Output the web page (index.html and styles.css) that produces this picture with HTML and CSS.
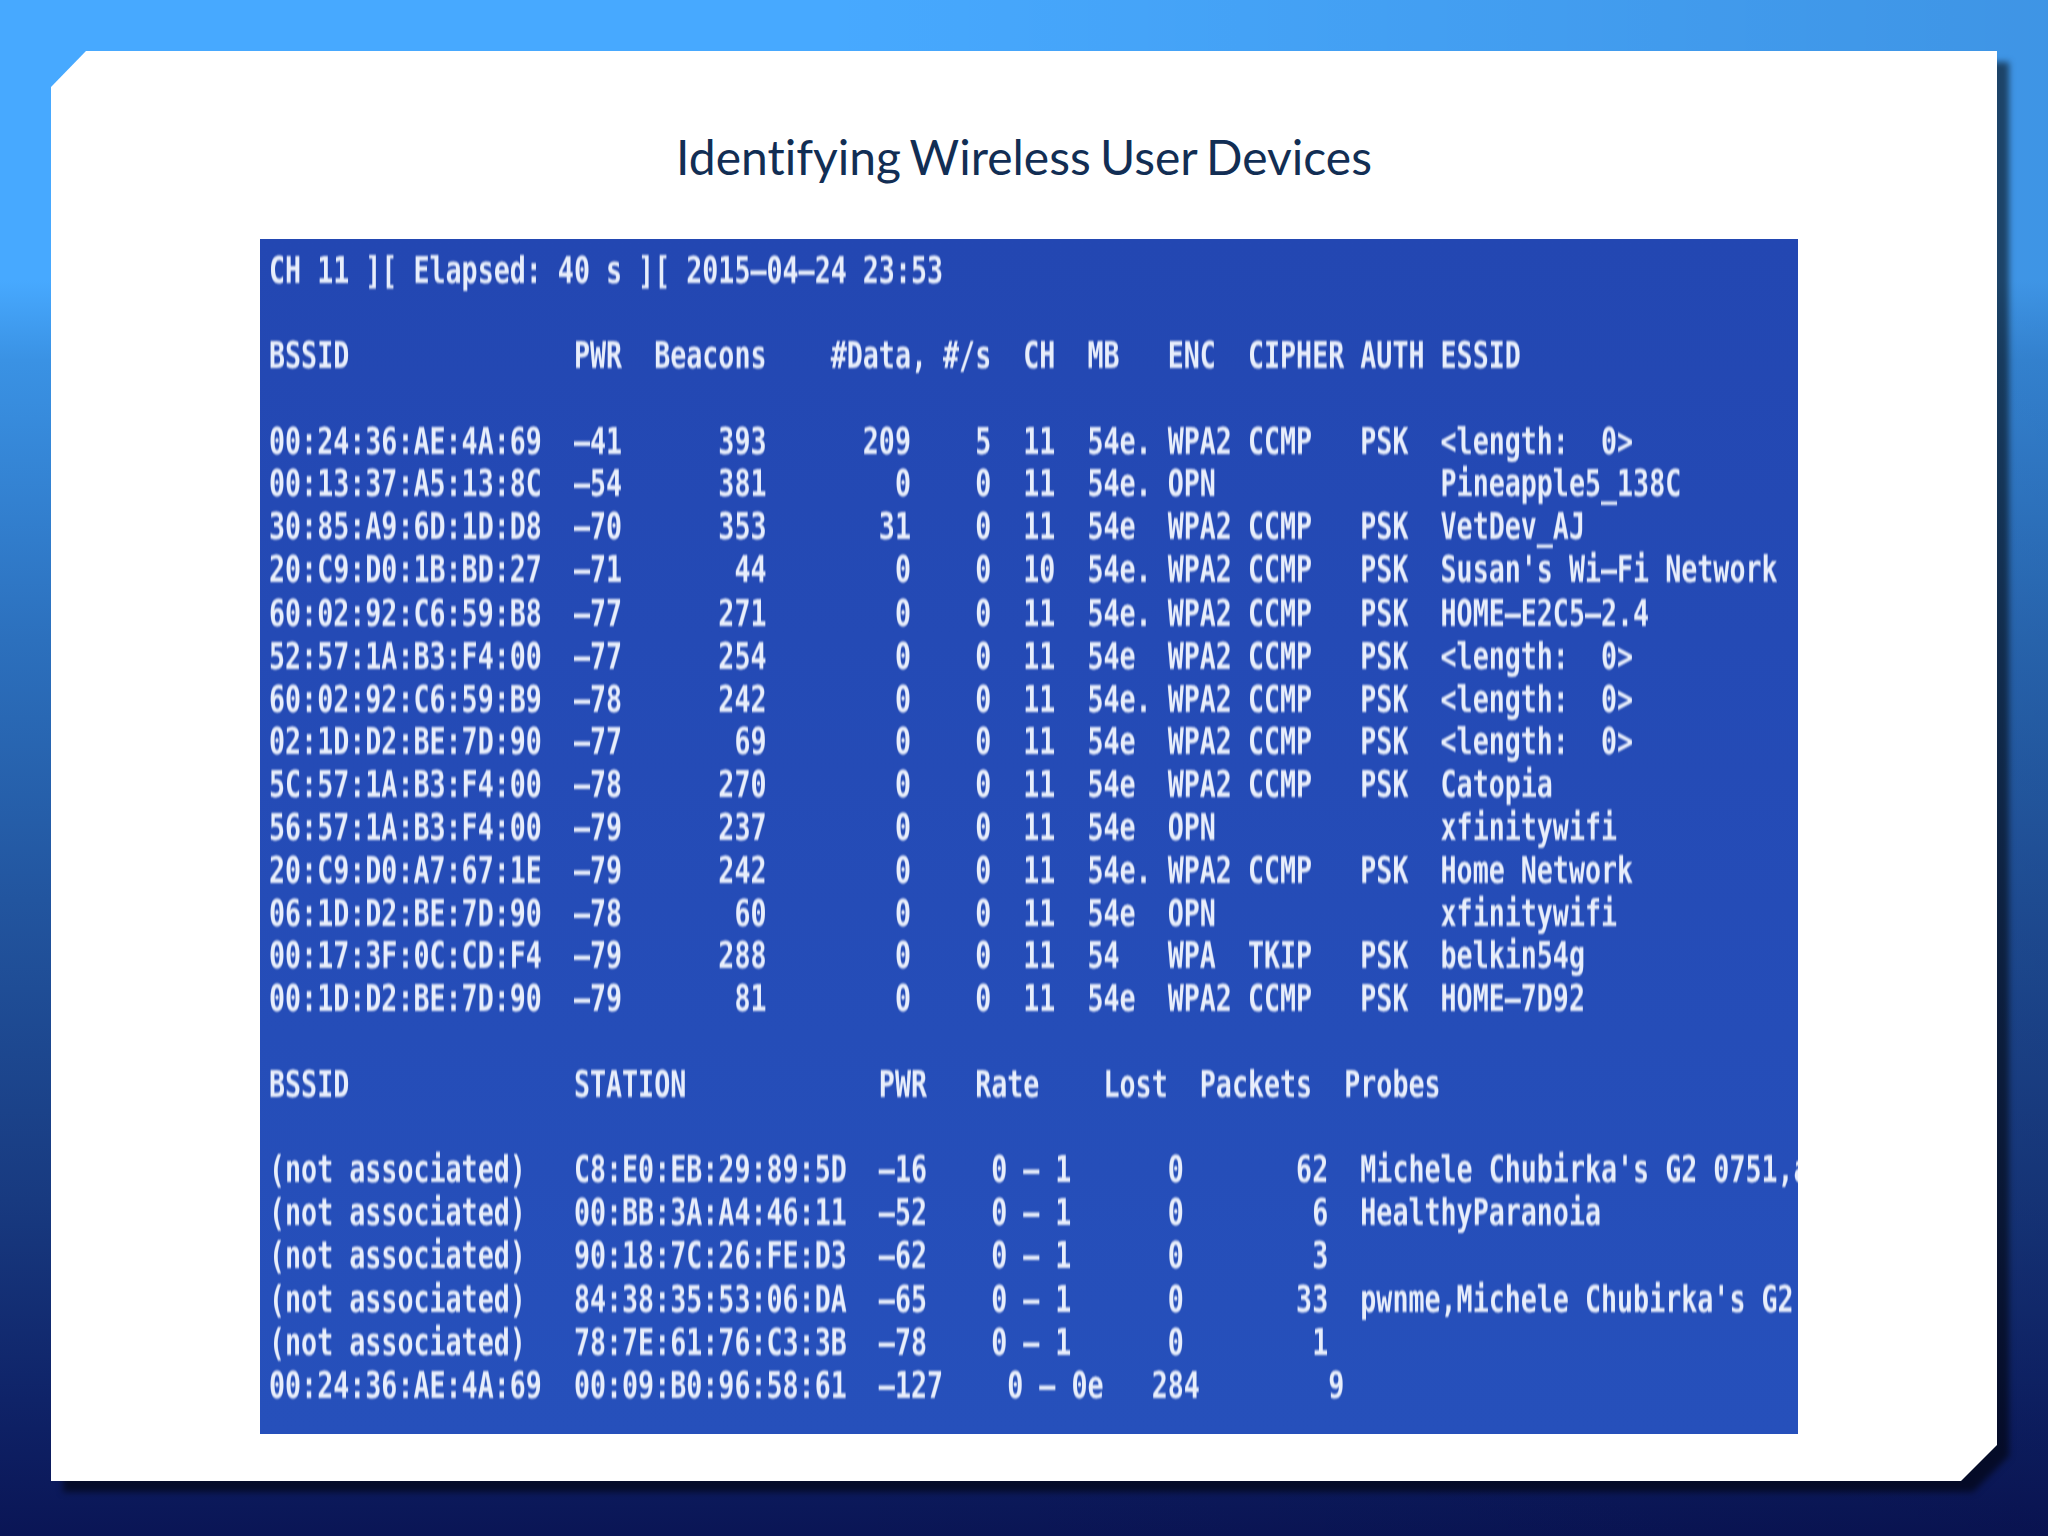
FILE: index.html
```html
<!DOCTYPE html>
<html lang="en">
<head>
<meta charset="utf-8">
<title>Identifying Wireless User Devices</title>
<link rel="stylesheet" href="styles.css">
</head>
<body>
<main class="slide-shadow">
  <section class="slide">
    <h1 class="title">Identifying Wireless User Devices</h1>
    <div class="terminal">
<pre class="output">CH 11 ][ Elapsed: 40 s ][ 2015–04–24 23:53

BSSID              PWR  Beacons    #Data, #/s  CH  MB   ENC  CIPHER AUTH ESSID

00:24:36:AE:4A:69  –41      393      209    5  11  54e. WPA2 CCMP   PSK  &lt;length:  0&gt;
00:13:37:A5:13:8C  –54      381        0    0  11  54e. OPN              Pineapple5_138C
30:85:A9:6D:1D:D8  –70      353       31    0  11  54e  WPA2 CCMP   PSK  VetDev_AJ
20:C9:D0:1B:BD:27  –71       44        0    0  10  54e. WPA2 CCMP   PSK  Susan's Wi–Fi Network
60:02:92:C6:59:B8  –77      271        0    0  11  54e. WPA2 CCMP   PSK  HOME–E2C5–2.4
52:57:1A:B3:F4:00  –77      254        0    0  11  54e  WPA2 CCMP   PSK  &lt;length:  0&gt;
60:02:92:C6:59:B9  –78      242        0    0  11  54e. WPA2 CCMP   PSK  &lt;length:  0&gt;
02:1D:D2:BE:7D:90  –77       69        0    0  11  54e  WPA2 CCMP   PSK  &lt;length:  0&gt;
5C:57:1A:B3:F4:00  –78      270        0    0  11  54e  WPA2 CCMP   PSK  Catopia
56:57:1A:B3:F4:00  –79      237        0    0  11  54e  OPN              xfinitywifi
20:C9:D0:A7:67:1E  –79      242        0    0  11  54e. WPA2 CCMP   PSK  Home Network
06:1D:D2:BE:7D:90  –78       60        0    0  11  54e  OPN              xfinitywifi
00:17:3F:0C:CD:F4  –79      288        0    0  11  54   WPA  TKIP   PSK  belkin54g
00:1D:D2:BE:7D:90  –79       81        0    0  11  54e  WPA2 CCMP   PSK  HOME–7D92

BSSID              STATION            PWR   Rate    Lost  Packets  Probes

(not associated)   C8:E0:EB:29:89:5D  –16    0 – 1      0       62  Michele Chubirka's G2 0751,a
(not associated)   00:BB:3A:A4:46:11  –52    0 – 1      0        6  HealthyParanoia
(not associated)   90:18:7C:26:FE:D3  –62    0 – 1      0        3
(not associated)   84:38:35:53:06:DA  –65    0 – 1      0       33  pwnme,Michele Chubirka's G2
(not associated)   78:7E:61:76:C3:3B  –78    0 – 1      0        1
00:24:36:AE:4A:69  00:09:B0:96:58:61  –127    0 – 0e   284        9</pre>
    </div>
  </section>
</main>
</body>
</html>
```
FILE: styles.css
```css
html, body {
  margin: 0;
  height: 100%;
}

body {
  width: 2048px;
  height: 1536px;
  overflow: hidden;
  box-sizing: border-box;
  padding: 51px 51px 55px;
  background:
    linear-gradient(90deg, rgba(0, 0, 40, 0) 40%, rgba(0, 0, 40, 0.12) 100%),
    linear-gradient(180deg, #47a9ff 0, #47a9ff 280px, #3a92e4 360px, #2c70bd 640px, #22559f 900px, #183a80 1200px, #0f2368 1400px, #0a1555 1536px);
}

.slide-shadow {
  display: block;
  height: 100%;
  filter: drop-shadow(12px 11px 3px rgba(0, 0, 0, 0.55));
}

.slide {
  height: 100%;
  box-sizing: border-box;
  background: #fff;
  clip-path: polygon(35px 0, 100% 0, 100% calc(100% - 36px), calc(100% - 36px) 100%, 0 100%, 0 36px);
  display: flex;
  flex-direction: column;
}

.title {
  margin: 0;
  height: 188px;
  line-height: 212px;
  text-align: center;
  font-family: Lato, "Open Sans", sans-serif;
  font-size: 48px;
  font-weight: 400;
  font-variant-ligatures: none;
  color: #122e54;
  word-spacing: -3px;
}

.terminal {
  height: 1195px;
  margin: 0 199px 0 209px;
  overflow: hidden;
  box-sizing: border-box;
  padding: 9px 0 0 9px;
  background: linear-gradient(180deg, #2347b2 0, #2650bb 100%);
}

.output {
  margin: 0;
  font-family: "DejaVu Sans Mono", monospace;
  font-size: 26.67px;
  line-height: 31.07px;
  font-weight: 700;
  color: #e8eefb;
  transform: scaleY(1.38);
  transform-origin: 0 0;
  filter: blur(0.6px);
}
```
